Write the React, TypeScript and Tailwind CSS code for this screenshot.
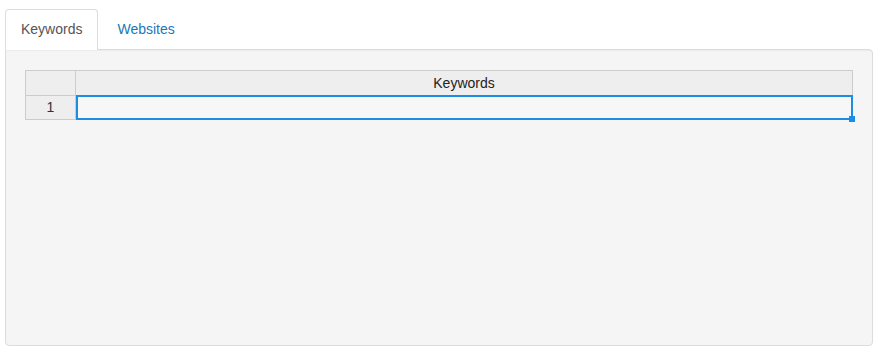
import React from "react";

export default function App() {
  return (
    <div
      className="w-[879px] h-[358px] bg-white"
      style={{ fontFamily: '"Liberation Sans", Arial, sans-serif' }}
    >
      <div className="pt-[9px] pl-[5px] pr-[6px]">
        <div className="flex h-[41px] text-[14px] leading-[20px]">
          <div className="relative z-10 px-[15px] pt-[9px] pb-[10px] bg-white border border-[#ddd] border-b-0 rounded-t-[4px] text-[#555] h-[41px]">
            Keywords
          </div>
          <div className="ml-[2px] px-[17px] pt-[10px] text-[#1a78b8]">Websites</div>
        </div>
        <div className="-mt-px h-[297px] bg-[#f5f5f5] border border-[#dcdcdc] rounded-b-[4px] rounded-tr-[4px] shadow-[inset_0_1px_1px_rgba(0,0,0,0.04)] px-[19px] pt-[20px]">
          <div className="text-[14px] text-[#222]">
            <div className="flex h-[26px]">
              <div className="w-[51px] bg-[#eeeeee] border border-[#cccccc]" />
              <div className="flex-1 bg-[#eeeeee] border border-l-0 border-[#cccccc] flex items-center justify-center">
                Keywords
              </div>
            </div>
            <div className="flex h-[24px]">
              <div className="w-[51px] bg-[#eeeeee] border border-t-0 border-[#cccccc] flex items-center justify-center text-[#333]">
                1
              </div>
              <div className="relative flex-1 -mt-px h-[25px] border-2 border-[#1b8ee4] bg-[#f7f7f7]">
                <div className="absolute -right-[4px] -bottom-[4px] w-[6px] h-[6px] bg-[#1b8ee4]" />
              </div>
            </div>
          </div>
        </div>
      </div>
    </div>
  );
}
